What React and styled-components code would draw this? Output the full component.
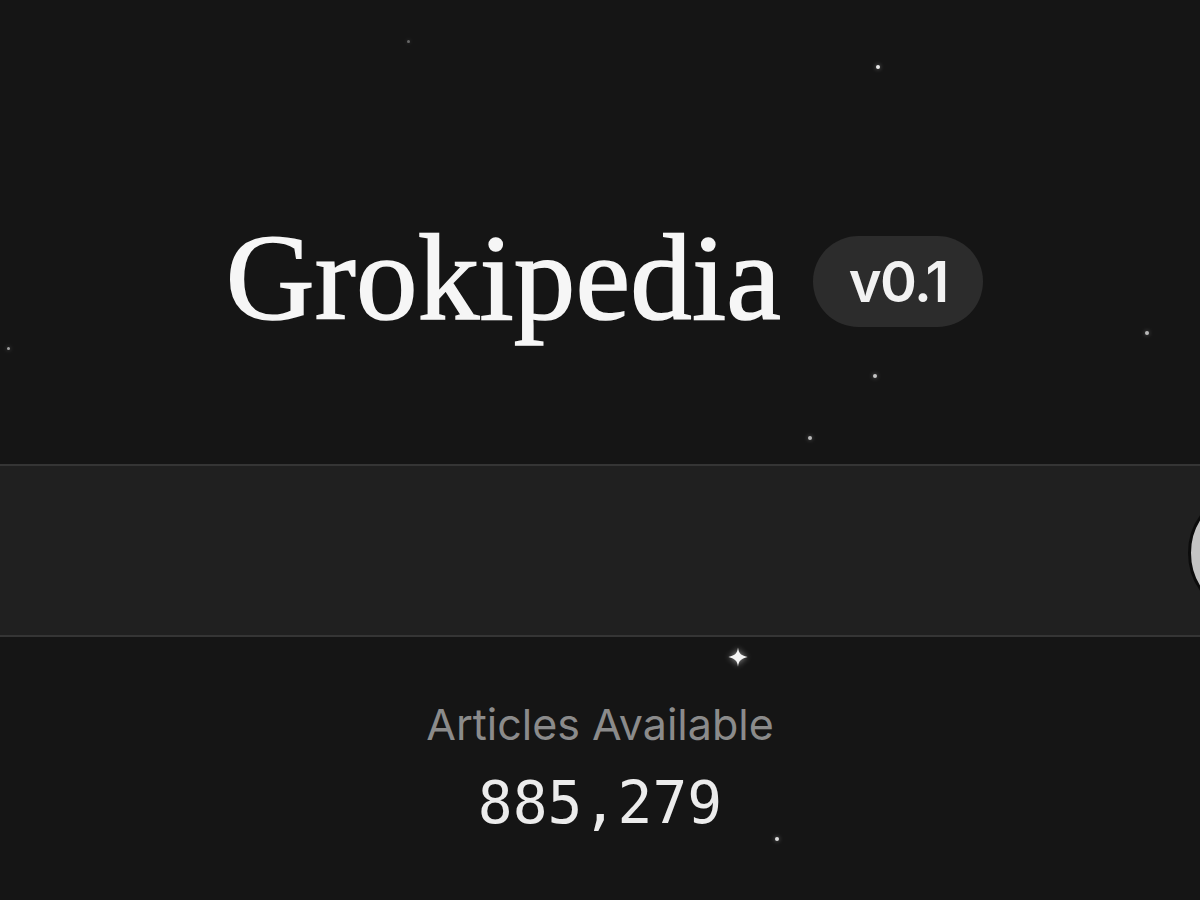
import React from 'react';
import styled, { createGlobalStyle } from 'styled-components';

// background specks, placed on the canvas
const specks = [
    { x: 408, y: 41, size: 3, glow: 0.35 },
    { x: 878, y: 67, size: 4, glow: 0.9 },
    { x: 8, y: 348, size: 3, glow: 0.6 },
    { x: 1147, y: 333, size: 4, glow: 0.7 },
    { x: 875, y: 376, size: 4, glow: 0.75 },
    { x: 810, y: 438, size: 4, glow: 0.7 },
    { x: 777, y: 839, size: 4, glow: 0.85 },
];

const GlobalStyle = createGlobalStyle`
    html, body {
        margin: 0;
        padding: 0;
        background: #151515;
    }
    * {
        box-sizing: border-box;
    }
`;

const Page = styled.main`
    position: relative;
    width: 100%;
    height: 900px;
    overflow: hidden;
    background: #151515;
    display: flex;
    flex-direction: column;
    align-items: center;
    padding-top: 216px;
`;

const Speck = styled.span`
    position: absolute;
    width: ${p => p.size}px;
    height: ${p => p.size}px;
    border-radius: 50%;
    background: #fff;
    box-shadow: 0 0 4px rgba(255, 255, 255, 0.5);
`;

const Sparkle = styled.svg`
    position: absolute;
    left: 727px;
    top: 646px;
    width: 22px;
    height: 22px;
    filter: drop-shadow(0 0 3px rgba(255, 255, 255, 0.6));
`;

const TitleRow = styled.div`
    display: flex;
    align-items: center;
    gap: 32px;
    margin-left: 9px;
`;

const Title = styled.h1`
    margin: 0;
    font-family: "Liberation Serif", "Times New Roman", serif;
    font-weight: 400;
    font-size: 123px;
    line-height: 1;
    color: #f6f6f6;
    -webkit-text-stroke: 1.6px #f6f6f6;
    letter-spacing: 0.2px;
`;

const Version = styled.span`
    display: inline-flex;
    align-items: center;
    justify-content: center;
    width: 170px;
    height: 91px;
    border-radius: 46px;
    background: #2c2c2c;
    font-family: Inter, "Liberation Sans", sans-serif;
    font-weight: 600;
    font-size: 56px;
    letter-spacing: -1.5px;
    color: #f2f2f2;
    margin-top: 8px;
`;

const SearchBar = styled.div`
    width: calc(100% + 280px);
    height: 173px;
    margin-top: 125px;
    background: #202020;
    border-top: 2px solid #353535;
    border-bottom: 2px solid #353535;
    display: flex;
    align-items: center;
    justify-content: flex-end;
    padding-right: 22px;
`;

const SearchButton = styled.button`
    width: 130px;
    height: 130px;
    border-radius: 50%;
    border: 3px solid #0c0c0c;
    background: #c4c4c4;
    padding: 0;
    margin-top: 4px;
`;

const Stats = styled.div`
    display: flex;
    flex-direction: column;
    align-items: center;
    margin-top: 60px;
`;

const StatLabel = styled.div`
    font-family: Inter, "Liberation Sans", sans-serif;
    font-size: 43px;
    line-height: 54px;
    color: #8b8b8b;
`;

const StatValue = styled.div`
    margin-top: 17px;
    font-family: "DejaVu Sans Mono", "Liberation Mono", monospace;
    font-size: 58px;
    line-height: 70px;
    color: #ececec;
`;

const App = () => {
    return (
        <>
            <GlobalStyle />
            <Page>
                {specks.map((s, i) => (
                    <Speck key={i} size={s.size} style={{ left: s.x - s.size / 2, top: s.y - s.size / 2, opacity: s.glow }} />
                ))}
                <Sparkle viewBox="0 0 24 24">
                    <path d="M12 1.5 C13 8 14.5 9.6 22.5 12 C14.5 14.4 13 16 12 22.5 C11 16 9.5 14.4 1.5 12 C9.5 9.6 11 8 12 1.5 Z" fill="#f4f4f4" />
                </Sparkle>
                <TitleRow>
                    <Title>Grokipedia</Title>
                    <Version>v0.1</Version>
                </TitleRow>
                <SearchBar>
                    <SearchButton aria-label="Search" />
                </SearchBar>
                <Stats>
                    <StatLabel>Articles Available</StatLabel>
                    <StatValue>885,279</StatValue>
                </Stats>
            </Page>
        </>
    );
};

export default App;
